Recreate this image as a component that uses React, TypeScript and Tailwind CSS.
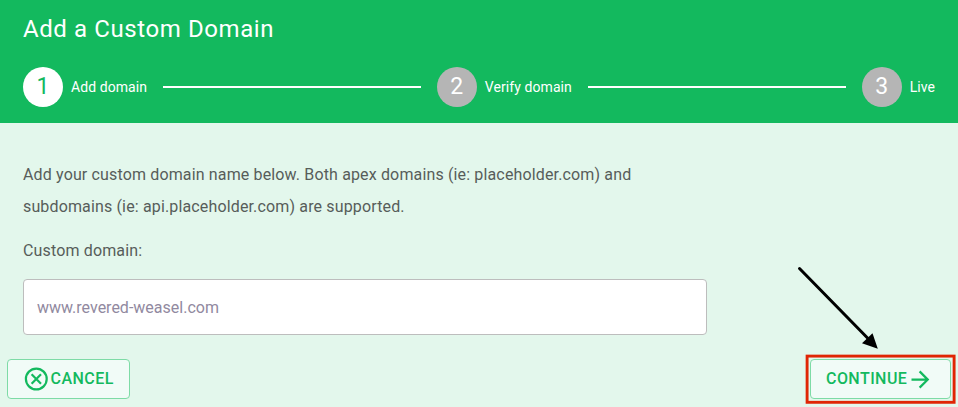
import React from "react";

function Step({ n, label, active }: { n: number; label: string; active?: boolean }) {
  return (
    <div className="flex items-center gap-2">
      <div
        className={
          "flex h-10 w-10 items-center justify-center rounded-full pb-px text-[23px] leading-[39px] " +
          (active ? "bg-white text-[#13b95e]" : "bg-[#b5b5b5] text-white")
        }
      >
        {n}
      </div>
      <span className="whitespace-nowrap text-sm leading-5 tracking-[0.08px] text-white">{label}</span>
    </div>
  );
}

function CloseCircle() {
  return (
    <svg width="26" height="26" viewBox="0 0 26 26" fill="none" stroke="currentColor" strokeWidth="2.2">
      <circle cx="13.3" cy="13" r="10.4" />
      <path d="M8.6 8.3l9.4 9.4M18 8.3l-9.4 9.4" />
    </svg>
  );
}

function ArrowRight() {
  return (
    <svg width="27" height="27" viewBox="0 0 24 24" fill="currentColor">
      <path d="M4,11V13H16L10.5,18.5L11.92,19.92L19.84,12L11.92,4.08L10.5,5.5L16,11H4Z" />
    </svg>
  );
}

export default function App() {
  return (
    <div className="relative flex h-[407px] w-[958px] flex-col overflow-hidden bg-[#e3f7ec] font-['Roboto',sans-serif]">
      <header className="h-[123px] bg-[#13b95e] px-[23px] pt-[13px]">
        <h1 className="text-2xl leading-8 tracking-[0.59px] text-white">Add a Custom Domain</h1>
        <div className="mt-[22px] flex items-center gap-4">
          <Step n={1} label="Add domain" active />
          <div className="h-0.5 flex-1 bg-white" />
          <Step n={2} label="Verify domain" />
          <div className="h-0.5 flex-1 bg-white" />
          <Step n={3} label="Live" />
        </div>
      </header>
      <main className="px-[23px] pt-9 text-base tracking-[0.145px] text-[#575d5a]">
        <p className="w-[684px] leading-8">
          Add your custom domain name below. Both apex domains (ie: placeholder.com) and
          <br />
          subdomains (ie: api.placeholder.com) are supported.
        </p>
        <label className="mt-3 block leading-8">Custom domain:</label>
        <input
          className="mt-3 block h-14 w-[684px] rounded border border-[#bdbdbd] bg-white px-[13px] tracking-normal placeholder:text-[#9189a0] placeholder:opacity-100"
          placeholder="www.revered-weasel.com"
        />
      </main>
      <footer className="mt-6 flex justify-between pr-[7px] pl-[7px] text-base font-medium text-[#13b95e]">
        <button className="flex h-10 w-[123px] items-center rounded border border-[#7edba6] bg-[#f1fbf7] pl-[15px] tracking-[0.45px]">
          <CloseCircle />
          <span className="ml-[1.5px]">CANCEL</span>
        </button>
        <button className="flex h-10 w-[141px] items-center rounded border border-[#7edba6] bg-[#f1fbf7] pl-[15px] tracking-[0.45px]">
          CONTINUE
          <ArrowRight />
        </button>
      </footer>
      <svg className="absolute top-[260px] left-[790px]" width="168" height="147" viewBox="790 260 168 147">
        <rect x="807.1" y="356.1" width="147" height="46.2" fill="none" stroke="#e02504" strokeWidth="2.9" />
        <path d="M799.5 268.5L869 339.5" stroke="#000" strokeWidth="3" strokeLinecap="round" />
        <path d="M877.8 348.8L862 343.2L872.5 333.3Z" fill="#000" />
      </svg>
    </div>
  );
}
